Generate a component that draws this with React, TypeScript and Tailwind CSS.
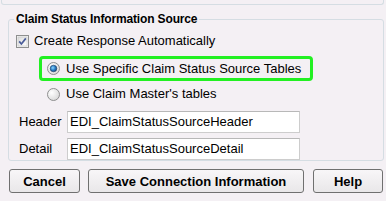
import React from "react";

const CheckBox: React.FC = () => (
  <svg width="13" height="13" viewBox="0 0 13 13" className="shrink-0">
    <defs>
      <linearGradient id="cbg" x1="0" y1="0" x2="1" y2="1">
        <stop offset="0" stopColor="#dcdcdc" />
        <stop offset="1" stopColor="#ffffff" />
      </linearGradient>
    </defs>
    <rect x="0.5" y="0.5" width="12" height="12" fill="#f4f4f4" stroke="#8e8f8f" />
    <rect x="2" y="2" width="9" height="9" fill="url(#cbg)" stroke="#c4c4c4" strokeWidth="0.6" />
    <path d="M3.2 6.4 L5.4 9 L9.8 3.4" fill="none" stroke="#4a5c99" strokeWidth="1.7" />
  </svg>
);

const Radio: React.FC<{ checked?: boolean }> = ({ checked }) => (
  <svg width="13" height="13" viewBox="0 0 13 13" className="shrink-0">
    <defs>
      <radialGradient id="rbg" cx="0.35" cy="0.35" r="0.8">
        <stop offset="0" stopColor="#ffffff" />
        <stop offset="1" stopColor="#d4d4d4" />
      </radialGradient>
      <radialGradient id="rdot" cx="0.4" cy="0.4" r="0.7">
        <stop offset="0" stopColor="#8fd8ff" />
        <stop offset="0.5" stopColor="#2a7fc8" />
        <stop offset="1" stopColor="#163e70" />
      </radialGradient>
    </defs>
    <circle cx="6.5" cy="6.5" r="6" fill="url(#rbg)" stroke="#8e8f8f" />
    {checked && <circle cx="6.5" cy="6.5" r="3.3" fill="url(#rdot)" stroke="#1d3f66" strokeWidth="0.6" />}
  </svg>
);

const Btn: React.FC<{ label: string; className: string }> = ({ label, className }) => (
  <button
    className={`h-[24px] border border-[#707070] rounded-[3px] bg-gradient-to-b from-[#f8f6f8] to-[#e9e7e9] font-bold text-[13px] text-black leading-none ${className}`}
  >
    {label}
  </button>
);

export default function App() {
  return (
    <div className="w-[386px] h-[201px] bg-[#f4f0f4] font-['Liberation_Sans',Arial,sans-serif] text-[13px] text-black overflow-hidden">
      <div className="ml-[1px] w-[383px] h-[5px] border border-t-0 border-[#d5dde3] rounded-b-[3px]" />

      <fieldset className="m-0 p-0 mt-[7px] ml-[8px] w-[376px] h-[149px] border border-[#d5dde3] rounded-[3px]">
        <legend className="ml-[5px] px-[2px] text-[12px] leading-[14px] font-bold tracking-[-0.15px]">
          Claim Status Information Source
        </legend>

        <div className="mt-[7px] ml-[7px] h-[16px] flex items-center gap-[5px]">
          <CheckBox />
          <span className="leading-[16px]">Create Response Automatically</span>
        </div>

        <div className="mt-[7px] ml-[30px] w-[274px] h-[25px] border-[3px] border-[#22f022] rounded-[4px] flex items-center pl-[5px] gap-[6px]">
          <Radio checked />
          <span className="leading-[16px]">Use Specific Claim Status Source Tables</span>
        </div>

        <div className="mt-[5px] ml-[38px] h-[16px] flex items-center gap-[6px]">
          <Radio />
          <span className="leading-[16px]">Use Claim Master's tables</span>
        </div>

        <div className="mt-[9px] ml-[10px] flex items-center">
          <span className="w-[48px]">Header</span>
          <div className="w-[233px] h-[22px] bg-white border border-[#cdcdcd] border-t-[#b8b8b8] px-[2px] flex items-center">
            EDI_ClaimStatusSourceHeader
          </div>
        </div>

        <div className="mt-[5px] ml-[10px] flex items-center">
          <span className="w-[48px]">Detail</span>
          <div className="w-[233px] h-[22px] bg-white border border-[#cdcdcd] border-t-[#b8b8b8] px-[2px] flex items-center">
            EDI_ClaimStatusSourceDetail
          </div>
        </div>
      </fieldset>

      <div className="mt-[8px] flex">
        <Btn label="Cancel" className="ml-[9px] w-[71px]" />
        <Btn label="Save Connection Information" className="ml-[8px] w-[216px]" />
        <Btn label="Help" className="ml-[9px] w-[70px]" />
      </div>
    </div>
  );
}
